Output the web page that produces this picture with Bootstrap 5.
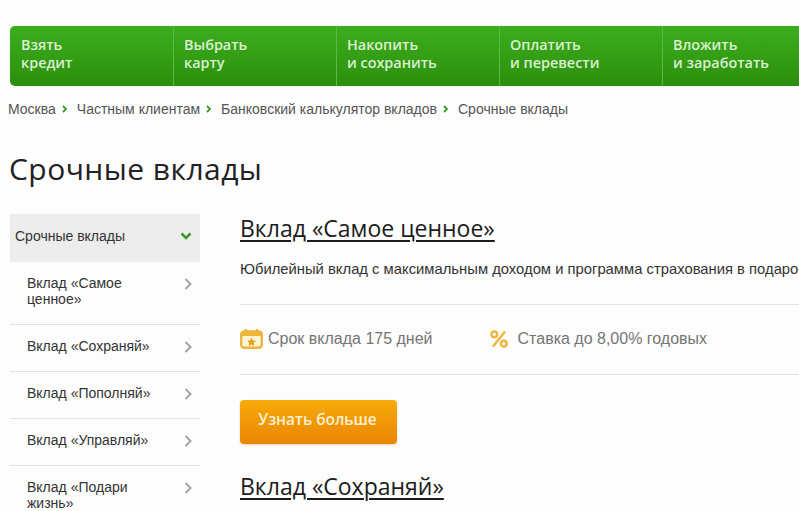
<!DOCTYPE html>
<html lang="ru"><head><meta charset="utf-8"><title>Срочные вклады</title>
<link href="https://cdn.jsdelivr.net/npm/bootstrap@5.3.0/dist/css/bootstrap.min.css" rel="stylesheet">
<style>
html,body{height:511px;overflow:hidden}
body{background:#fdfdfd;font-family:"Liberation Sans",Arial,sans-serif;color:#333;padding:26px 0 0 10px;width:799px}
.topmenu{height:60px;width:789px;border-radius:5px 0 0 5px;background:linear-gradient(#3dae1e,#2b8f0c)}
.topitem{width:163px;height:60px;padding:10px 0 0 10px;font:600 14.4px/18px "Open Sans",sans-serif;color:#dcefd2;border-left:1px solid #5cb948}
.topitem:first-child{border-left:0;padding-left:11px}
.topitem:last-child{width:137px}
.crumbs{margin:14px 0 0 -2px;height:18px;font-size:14px;line-height:18px;color:#555;gap:6px}
.crumbs svg{margin:0 3px 0 0}
.pagetitle{font:400 30px/36px "Open Sans",sans-serif;color:#222;margin:33px 0 0 -1px;letter-spacing:.45px}
.colside{width:190px;flex:none;margin-right:40px}
.sidehead{height:48px;background:#ececec;padding:0 8px 4px 5px;font-size:14px;color:#333}
.sideitem{border-bottom:1px solid #e4e4e4;padding:13px 8px 17px 17px;font-size:14px;line-height:16px;color:#333}
.sideitem svg{margin-top:3px;flex:none}
.sideitem span{width:115px}
.maincol{width:559px;flex:none}
.dtitle{font:400 23px/28px "Open Sans",sans-serif;color:#1c1c1c;text-decoration:underline;text-decoration-thickness:2px;text-underline-offset:3px;margin:0;white-space:nowrap}
.lede{font-size:14.8px;line-height:18px;color:#333;white-space:nowrap;margin:18px 0 0;overflow:hidden}
.rule{height:1px;background:#e2e2e2}
.metas{height:69px;font-size:16px;color:#757575;padding-bottom:2px}
.gobtn{width:157px;height:44px;border-radius:4px;background:linear-gradient(#f7ab0a,#ea8504);color:#fdf0d0;font:600 15.4px/20px "Open Sans",sans-serif;border:0;padding:0 2px 4px 0;box-shadow:0 1px 2px rgba(200,120,0,.3)}
</style></head>
<body>
<nav class="topmenu d-flex">
<div class="topitem">Взять<br>кредит</div>
<div class="topitem">Выбрать<br>карту</div>
<div class="topitem">Накопить<br>и сохранить</div>
<div class="topitem">Оплатить<br>и перевести</div>
<div class="topitem">Вложить<br>и заработать</div>
</nav>
<div class="crumbs d-flex align-items-center text-nowrap">
<span>Москва</span><svg width="6" height="8" viewBox="0 0 6 8"><path d="M1 1l3 3-3 3" fill="none" stroke="#3c9a2a" stroke-width="1.8"/></svg>
<span>Частным клиентам</span><svg width="6" height="8" viewBox="0 0 6 8"><path d="M1 1l3 3-3 3" fill="none" stroke="#3c9a2a" stroke-width="1.8"/></svg>
<span>Банковский калькулятор вкладов</span><svg width="6" height="8" viewBox="0 0 6 8"><path d="M1 1l3 3-3 3" fill="none" stroke="#3c9a2a" stroke-width="1.8"/></svg>
<span>Срочные вклады</span>
</div>
<h1 class="pagetitle">Срочные вклады</h1>
<div class="d-flex" style="margin-top:27px">
<aside class="colside">
<div class="sidehead d-flex align-items-center justify-content-between"><span>Срочные вклады</span><svg width="12" height="8" viewBox="0 0 12 8"><path d="M1.5 1.5L6 6l4.5-4.5" fill="none" stroke="#3c9a2a" stroke-width="2.6"/></svg></div>
<div class="sideitem d-flex justify-content-between"><span>Вклад «Самое ценное»</span><svg width="8" height="12" viewBox="0 0 8 12"><path d="M1.5 1l5 5-5 5" fill="none" stroke="#a3a3a3" stroke-width="2"/></svg></div>
<div class="sideitem d-flex justify-content-between"><span class="text-nowrap">Вклад «Сохраняй»</span><svg width="8" height="12" viewBox="0 0 8 12"><path d="M1.5 1l5 5-5 5" fill="none" stroke="#a3a3a3" stroke-width="2"/></svg></div>
<div class="sideitem d-flex justify-content-between"><span class="text-nowrap">Вклад «Пополняй»</span><svg width="8" height="12" viewBox="0 0 8 12"><path d="M1.5 1l5 5-5 5" fill="none" stroke="#a3a3a3" stroke-width="2"/></svg></div>
<div class="sideitem d-flex justify-content-between"><span class="text-nowrap">Вклад «Управляй»</span><svg width="8" height="12" viewBox="0 0 8 12"><path d="M1.5 1l5 5-5 5" fill="none" stroke="#a3a3a3" stroke-width="2"/></svg></div>
<div class="sideitem d-flex justify-content-between"><span>Вклад «Подари жизнь»</span><svg width="8" height="12" viewBox="0 0 8 12"><path d="M1.5 1l5 5-5 5" fill="none" stroke="#a3a3a3" stroke-width="2"/></svg></div>
</aside>
<main class="maincol">
<h2 class="dtitle">Вклад «Самое ценное»</h2>
<p class="lede">Юбилейный вклад с максимальным доходом и программа страхования в подарок</p>
<div class="rule" style="margin-top:26px"></div>
<div class="metas d-flex align-items-center">
<svg width="23" height="20" viewBox="0 0 23 20" class="me-1"><rect x="1.2" y="2.5" width="20.6" height="16.3" rx="3" fill="#fdf3d6" stroke="#edb53a" stroke-width="2.4"/><path d="M1 4.5a2 2 0 0 1 2-2h17a2 2 0 0 1 2 2V7H1z" fill="#edb53a"/><path d="M6 0v4M17 0v4" stroke="#edb53a" stroke-width="2.2"/><path d="M11.5 8.5l1.4 2.9 3.1.4-2.3 2.1.6 3.1-2.8-1.5-2.8 1.5.6-3.1-2.3-2.1 3.1-.4z" fill="#e2a21f"/></svg>
<span style="margin-left:1px">Срок вклада 175 дней</span>
<svg width="18" height="18" viewBox="0 0 18 18" style="margin-left:57px;margin-right:10px"><circle cx="4.3" cy="4.3" r="2.9" fill="none" stroke="#edb53a" stroke-width="2.4"/><circle cx="13.7" cy="13.7" r="2.9" fill="none" stroke="#edb53a" stroke-width="2.4"/><path d="M15 1.5L3 16.5" stroke="#edb53a" stroke-width="2.4"/></svg>
<span>Ставка до 8,00% годовых</span>
</div>
<div class="rule"></div>
<button class="gobtn d-block" style="margin-top:25px">Узнать больше</button>
<h2 class="dtitle" style="margin-top:28px">Вклад «Сохраняй»</h2>
</main>
</div>
<script src="https://cdn.jsdelivr.net/npm/bootstrap@5.3.0/dist/js/bootstrap.bundle.min.js"></script>
</body></html>
